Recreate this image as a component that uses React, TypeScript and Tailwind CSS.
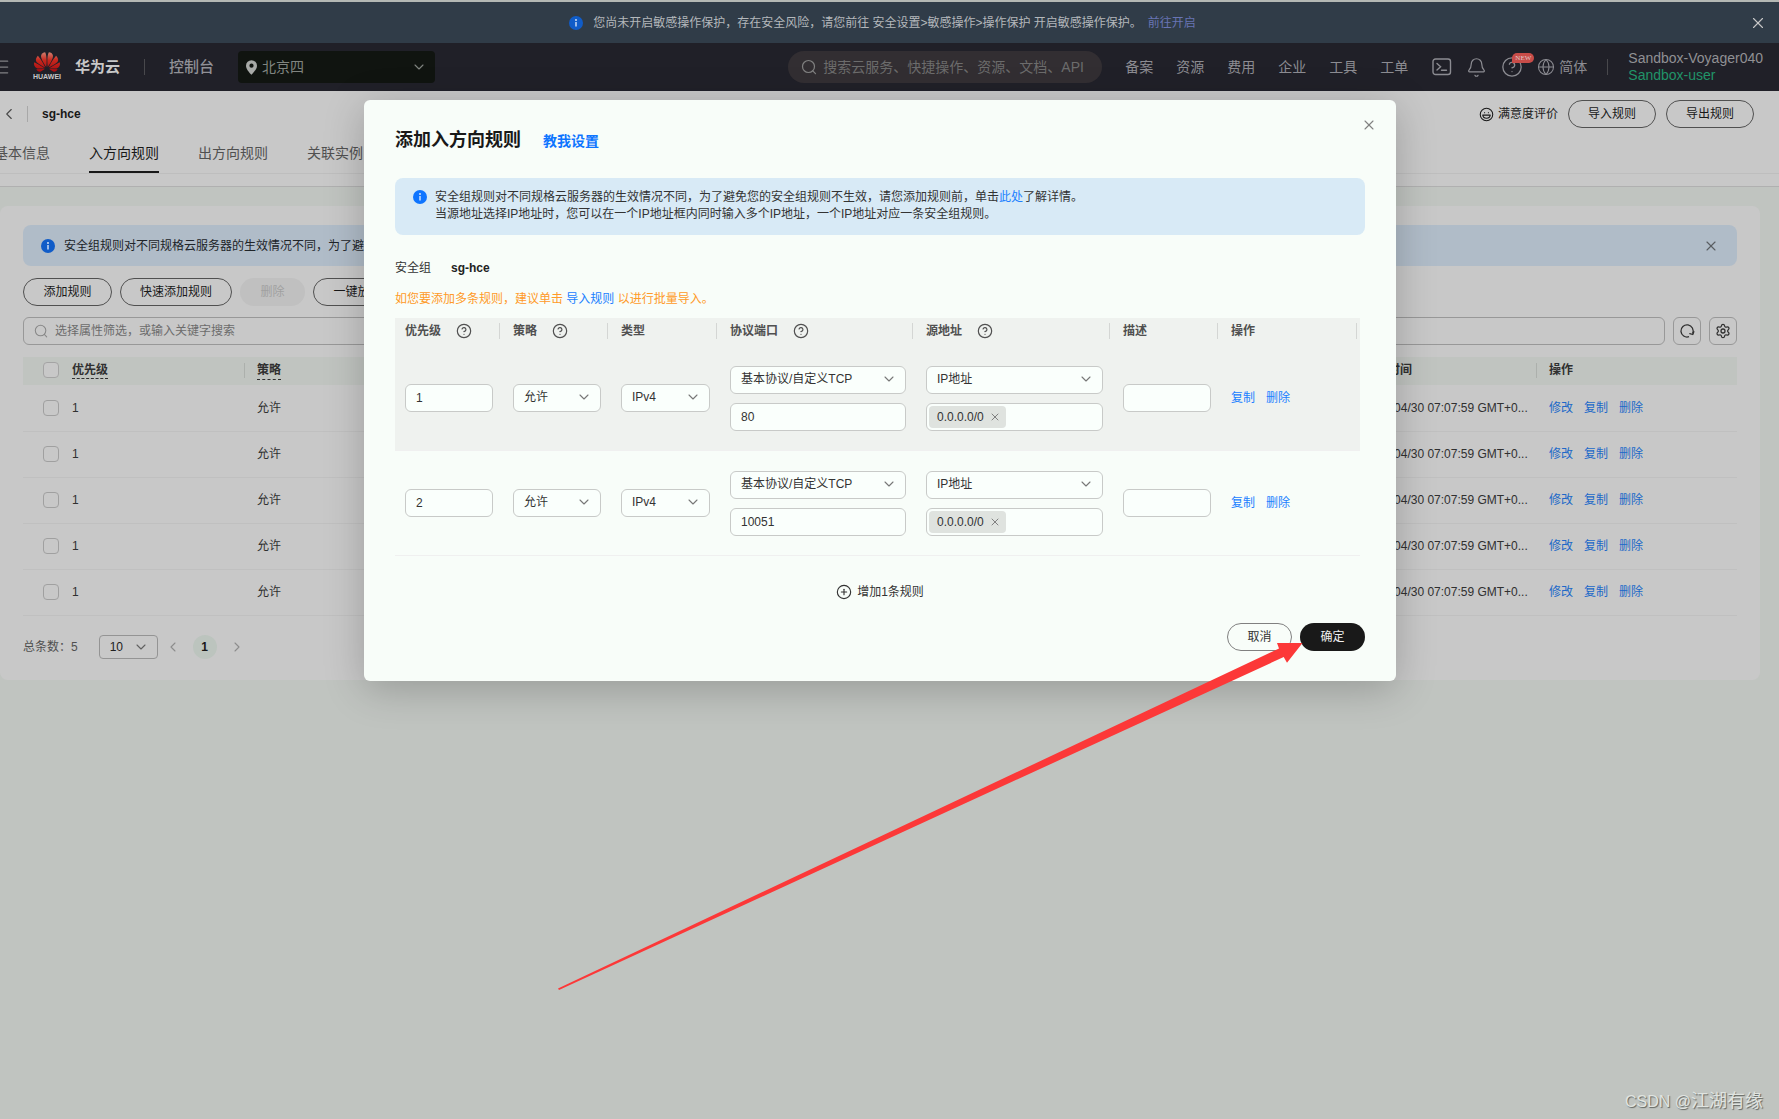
import React from 'react';
import { Bell, ChevronDown, ChevronLeft, ChevronRight, CircleHelp, CirclePlus, Globe, Laugh, Menu, Settings, X } from 'lucide-react';
import { SiHuawei } from 'react-icons/si';

const navLinks = ['备案', '资源', '费用', '企业', '工具', '工单'];

const tabs = ['基本信息', '入方向规则', '出方向规则', '关联实例'];

const savedRules = [1, 2, 3, 4, 5];

const newRules = [
  { priority: '1', port: '80', address: '0.0.0.0/0' },
  { priority: '2', port: '10051', address: '0.0.0.0/0' },
];

const ruleColumns = [
  { title: '优先级', help: true },
  { title: '策略', help: true },
  { title: '类型', help: false },
  { title: '协议端口', help: true },
  { title: '源地址', help: true },
  { title: '描述', help: false },
  { title: '操作', help: false },
];

const InfoIcon: React.FC<{ className?: string }> = ({ className }) => (
  <svg viewBox="0 0 14 14" className={`size-[14px] shrink-0 ${className ?? ''}`} aria-hidden="true">
    <circle cx="7" cy="7" r="7" fill="currentColor" />
    <circle cx="7" cy="4" r="0.9" fill="#e6eefa" />
    <path d="M7 6v4.6" stroke="#e6eefa" strokeWidth="1.3" />
  </svg>
);

const SearchIcon: React.FC<{ className?: string }> = ({ className }) => (
  <svg viewBox="0 0 16 16" fill="none" stroke="currentColor" strokeWidth="1.2" className={`shrink-0 ${className ?? ''}`} aria-hidden="true">
    <circle cx="7.5" cy="7.5" r="6" />
    <path d="M11.8 11.8l2.7 2.9" strokeLinecap="round" />
  </svg>
);

const PinIcon: React.FC = () => (
  <svg viewBox="0 0 12 16" className="h-[15px] w-[11px] shrink-0 text-[#a8aaa8]" aria-hidden="true">
    <path fill="currentColor" fillRule="evenodd" d="M6 0a6 6 0 0 1 6 6c0 3.6-3.6 7.4-6 10C3.6 13.4 0 9.6 0 6a6 6 0 0 1 6-6Zm0 3.7a2.3 2.3 0 1 0 0 4.6 2.3 2.3 0 0 0 0-4.6Z" />
  </svg>
);

const TerminalIcon: React.FC = () => (
  <svg viewBox="0 0 20 18" fill="none" stroke="currentColor" strokeWidth="1.4" className="h-[18px] w-5" aria-hidden="true">
    <rect x="1" y="1" width="17.500" height="15.500" rx="2.500" />
    <path d="M5 5.500l3.600 3.300L5 12.100M9.500 12.300h5" strokeLinecap="round" />
  </svg>
);

const RefreshIcon: React.FC = () => (
  <svg viewBox="0 0 16 16" fill="none" stroke="currentColor" strokeWidth="1.3" className="size-4" aria-hidden="true">
    <path d="M10 13.7A6.100 6.100 0 1 1 13.600 10.400" />
    <path d="M10.8 10.6l3 .9 1-2.800" strokeLinecap="round" strokeLinejoin="round" />
  </svg>
);

const Logo: React.FC = () => (
  <div className="flex w-[26px] flex-col items-center">
    <svg width="0" height="0" className="absolute" aria-hidden="true">
      <defs>
        <linearGradient id="petal" x1="0" y1="0" x2="0" y2="1">
          <stop offset="0" stopColor="#d08070" />
          <stop offset="0.4" stopColor="#c8281e" />
          <stop offset="1" stopColor="#a80c10" />
        </linearGradient>
      </defs>
    </svg>
    <SiHuawei size={26} fill="url(#petal)" className="-my-1" />
    <span className="pt-px text-[7px] leading-[9px] font-bold text-[#c8c8c8]">HUAWEI</span>
  </div>
);

const Field: React.FC<{ label: string; value: string }> = ({ label, value }) => (
  <input
    aria-label={label}
    defaultValue={value}
    className="block h-7 w-full rounded-md border border-[#c8cac8] bg-[#fafffc] px-[10px] text-[#333]"
  />
);

const Dropdown: React.FC<{ label: string; value: string }> = ({ label, value }) => (
  <div className="relative">
    <select
      aria-label={label}
      defaultValue={value}
      className="block h-7 w-full appearance-none rounded-md border border-[#c8cac8] bg-[#fafffc] pr-7 pb-[2px] pl-[10px] text-[#333]"
    >
      <option>{value}</option>
    </select>
    <ChevronDown className="pointer-events-none absolute top-[5px] right-[9px] size-4 text-[#777]" strokeWidth={1.6} />
  </div>
);

const TopNotice: React.FC = () => (
  <div className="flex h-[43px] items-center border-t-2 border-[#b4b8b4] bg-[#303c48] pr-3 pl-4">
    <div className="flex flex-1 items-center justify-center text-[#b4b8bc]">
      <InfoIcon className="mr-[10px] text-[#105cc8]" />
      <span>您尚未开启敏感操作保护，存在安全风险，请您前往 安全设置&gt;敏感操作&gt;操作保护 开启敏感操作保护。</span>
      <a href="#" className="ml-[6px] text-[#6874b4]">前往开启</a>
    </div>
    <button aria-label="关闭提示" className="text-[#c8c8c8]">
      <X className="size-[18px]" strokeWidth={1.5} />
    </button>
  </div>
);

const Header: React.FC = () => (
  <header className="flex h-12 items-center bg-[#202028] pr-4 text-sm text-[#8c8c92]">
    <button aria-label="菜单" className="-ml-[9px] text-[#808084]">
      <Menu className="size-5" strokeWidth={1.5} />
    </button>
    <a href="#" className="ml-[23px] flex items-center gap-[15px]">
      <Logo />
      <span className="text-[15px] font-bold text-[#c8c8c8]">华为云</span>
    </a>
    <span className="mx-6 h-4 w-px bg-[#48484c]" />
    <a href="#" className="text-[15px] font-medium text-[#909096]">控制台</a>
    <button className="ml-6 flex h-8 w-[197px] items-center gap-[5px] rounded bg-[#101410] pr-2 pl-2 text-[#808480]">
      <PinIcon />
      <span className="flex-1 text-left">北京四</span>
      <ChevronDown className="size-4" strokeWidth={1.6} />
    </button>
    <div className="ml-auto flex h-8 w-[314px] items-center gap-[6px] rounded-full bg-[#322e32] px-[13px]">
      <SearchIcon className="size-4 text-[#808080]" />
      <input aria-label="搜索" placeholder="搜索云服务、快捷操作、资源、文档、API" className="min-w-0 flex-1 placeholder:text-[#6c6c6c]" />
    </div>
    <nav className="ml-[23px] flex gap-[23px]">
      {navLinks.map((link) => (
        <a key={link} href="#">{link}</a>
      ))}
    </nav>
    <div className="ml-6 flex items-center">
      <button aria-label="命令行"><TerminalIcon /></button>
      <button aria-label="消息" className="ml-[14px]"><Bell className="size-[21px]" strokeWidth={1.4} /></button>
      <button aria-label="帮助" className="relative ml-[14px]">
        <CircleHelp className="size-[22px]" strokeWidth={1.4} />
        <span className="absolute -top-[3px] left-[11px] rounded-full rounded-bl-none bg-[#c84c48] px-[3px] font-['Liberation_Serif',serif] text-[7px] leading-[10px] text-[#dcc8c8]">NEW</span>
      </button>
      <button className="ml-[14px] flex items-center gap-1">
        <Globe className="size-[18px]" strokeWidth={1.4} />
        简体
      </button>
    </div>
    <span className="mx-5 h-4 w-px bg-[#48484c]" />
    <div className="leading-[17px]">
      <div className="text-[#909094]">Sandbox-Voyager040</div>
      <div className="text-[#209468]">Sandbox-user</div>
    </div>
  </header>
);

const PageHeader: React.FC = () => (
  <div className="h-[96px] border-b border-[#b0b0b0] bg-[#c8c8c8]">
    <div className="flex h-[46px] items-center pr-[25px] text-[#181818]">
      <button aria-label="返回"><ChevronLeft className="size-[18px] text-[#484848]" strokeWidth={1.5} /></button>
      <span className="mx-[9px] h-4 w-px bg-[#a8a8a8]" />
      <h1 className="ml-[5px] font-bold">sg-hce</h1>
      <a href="#" className="mr-[10px] ml-auto flex items-center gap-1">
        <Laugh className="size-[15px]" strokeWidth={1.7} />
        满意度评价
      </a>
      <button className="mr-[10px] h-7 w-22 rounded-full border border-[#505050]">导入规则</button>
      <button className="h-7 w-22 rounded-full border border-[#505050]">导出规则</button>
    </div>
    <nav className="-ml-[6px] flex h-[37px] gap-[39px] border-b border-[#bebebe] text-sm">
      {tabs.map((tab) => (
        <a
          key={tab}
          href="#"
          className={
            tab === '入方向规则'
              ? 'border-b-2 border-[#181818] pt-[6px] text-[#181818]'
              : 'pt-[6px] text-[#505050]'
          }
        >
          {tab}
        </a>
      ))}
    </nav>
  </div>
);

const RulePanel: React.FC = () => (
  <main className="mt-[19px] mr-[19px] rounded-lg bg-[#c8c8c8] px-[23px] pt-[19px] pb-[21px] text-[#303030]">
    <div className="flex h-[41px] items-center rounded-lg bg-[#b0bcc8] px-[18px] text-[#202428]">
      <InfoIcon className="mr-[9px] text-[#105cc8]" />
      <span className="flex-1">安全组规则对不同规格云服务器的生效情况不同，为了避免您的安全组规则不生效，请您添加规则前，单击此处了解详情。</span>
      <button aria-label="关闭"><X className="size-4 text-[#585c60]" strokeWidth={1.6} /></button>
    </div>

    <div className="mt-3 flex gap-2 text-[#181818]">
      <button className="h-7 w-[89px] rounded-full border border-[#505050]">添加规则</button>
      <button className="h-7 w-[112px] rounded-full border border-[#505050]">快速添加规则</button>
      <button disabled className="h-7 w-[65px] rounded-full bg-[#c0c0c0] text-[#a0a0a0]">删除</button>
      <button className="h-7 w-[89px] rounded-full border border-[#505050]">一键放通</button>
    </div>

    <div className="mt-[11px] flex gap-2">
      <div className="flex h-7 flex-1 items-center gap-[7px] rounded-md border border-[#989898] px-[10px]">
        <SearchIcon className="size-[14px] text-[#888]" />
        <input aria-label="筛选规则" placeholder="选择属性筛选，或输入关键字搜索" className="min-w-0 flex-1 placeholder:text-[#6c6c6c]" />
      </div>
      <button aria-label="刷新" className="flex size-7 items-center justify-center rounded-md border border-[#989898]"><RefreshIcon /></button>
      <button aria-label="设置" className="flex size-7 items-center justify-center rounded-md border border-[#989898]"><Settings className="size-4" strokeWidth={1.9} /></button>
    </div>

    <table className="mt-3 w-full table-fixed text-left">
      <colgroup>
        <col className="w-[49px]" />
        <col className="w-[172px]" />
        <col />
        <col className="w-[188px]" />
        <col className="w-[201px]" />
      </colgroup>
      <thead className="bg-[#c0c4c0]">
        <tr className="h-7">
          <th className="pb-[2px] pl-5">
            <input type="checkbox" aria-label="全选" className="block size-4 appearance-none rounded border border-[#a4a4a4] bg-[#c8c8c8]" />
          </th>
          <th className="pb-[2px]"><span className="border-b border-dashed border-[#303030] pb-px">优先级</span></th>
          <th className="pb-[2px]">
            <div className="flex h-[15px] items-center border-l border-[#acb0ac] pl-3">
              <span className="border-b border-dashed border-[#303030] leading-[18px]">策略</span>
            </div>
          </th>
          <th className="pb-[2px] pl-4">修改时间</th>
          <th className="pb-[2px]"><div className="flex h-[15px] items-center border-l border-[#acb0ac] pl-3">操作</div></th>
        </tr>
      </thead>
      <tbody>
        {savedRules.map((id) => (
          <tr key={id} className="h-[46px] border-b border-[#c0c0c0]">
            <td className="pl-5">
              <input type="checkbox" aria-label={`选择规则${id}`} className="block size-4 appearance-none rounded border border-[#a0a0a0]" />
            </td>
            <td>1</td>
            <td className="pl-[13px]">允许</td>
            <td className="pl-4 whitespace-nowrap">2024/04/30 07:07:59 GMT+0...</td>
            <td className="pl-[13px] text-[#2068c8]">
              <div className="flex gap-[11px]">
                <a href="#">修改</a>
                <a href="#">复制</a>
                <a href="#">删除</a>
              </div>
            </td>
          </tr>
        ))}
      </tbody>
    </table>

    <div className="mt-[19px] flex h-6 items-center">
      <span className="text-[#505050]">总条数：5</span>
      <div className="relative ml-[21px]">
        <select aria-label="每页条数" className="block h-6 w-[59px] appearance-none rounded border border-[#949494] pl-[10px] text-[#202020]">
          <option>10</option>
        </select>
        <ChevronDown className="pointer-events-none absolute top-[4px] right-[9px] size-4 text-[#606060]" strokeWidth={1.6} />
      </div>
      <button aria-label="上一页" className="ml-[7px]"><ChevronLeft className="size-4 text-[#8c8c8c]" strokeWidth={1.6} /></button>
      <button className="mx-3 size-6 rounded-full bg-[#bcc4be] font-bold text-[#181818]">1</button>
      <button aria-label="下一页"><ChevronRight className="size-4 text-[#8c8c8c]" strokeWidth={1.6} /></button>
    </div>
  </main>
);

const AddRuleDialog: React.FC = () => (
  <div role="dialog" aria-label="添加入方向规则" className="relative w-[1032px] rounded-md bg-[#f8fdf9] px-[31px] pt-[26px] pb-[30px] text-[#333] shadow-[0_8px_40px_rgba(0,0,0,0.22)]">
    <button aria-label="关闭" className="absolute top-[17px] right-[19px]">
      <X className="size-4 text-[#808080]" strokeWidth={1.6} />
    </button>
    <div className="flex items-center gap-[22px]">
      <h2 className="text-lg font-bold text-[#191919]">添加入方向规则</h2>
      <a href="#" className="pt-[2px] text-sm font-bold text-[#0f75ff]">教我设置</a>
    </div>

    <div className="mt-6 flex rounded-lg bg-[#d8eaf6] px-[18px] pt-[11px] pb-3">
      <InfoIcon className="mt-px mr-2 text-[#0f75ff]" />
      <p className="leading-[17px]">
        安全组规则对不同规格云服务器的生效情况不同，为了避免您的安全组规则不生效，请您添加规则前，单击<a href="#" className="text-[#2080ff]">此处</a>了解详情。
        <br />
        当源地址选择IP地址时，您可以在一个IP地址框内同时输入多个IP地址，一个IP地址对应一条安全组规则。
      </p>
    </div>

    <div className="mt-[25px] flex gap-5">
      <span>安全组</span>
      <b className="text-[#222]">sg-hce</b>
    </div>
    <p className="mt-[15px] text-[#ff9a28]">
      如您要添加多条规则，建议单击 <a href="#" className="text-[#2080ff]">导入规则</a> 以进行批量导入。
    </p>

    <table className="mt-[11px] w-[965px] table-fixed text-left">
      <colgroup>
        <col className="w-[108px]" />
        <col className="w-[108px]" />
        <col className="w-[109px]" />
        <col className="w-[196px]" />
        <col className="w-[197px]" />
        <col className="w-[108px]" />
        <col className="w-[139px]" />
      </colgroup>
      <thead className="bg-[#eff2ef]">
        <tr className="h-7">
          {ruleColumns.map((column) => (
            <th key={column.title} className="pr-[3px] pb-[2px] pl-[10px] font-bold text-[#505050]">
              <div className="flex h-4 items-center gap-[15px] border-r border-[#d4d6d4]">
                {column.title}
                {column.help && <CircleHelp className="size-4" strokeWidth={1.8} />}
              </div>
            </th>
          ))}
        </tr>
      </thead>
      <tbody>
        {newRules.map((rule) => (
          <tr key={rule.priority} className="border-b border-[#f0f0f0] odd:bg-[#eff2ef]">
            <td className="px-[10px]"><Field label="优先级" value={rule.priority} /></td>
            <td className="px-[10px]"><Dropdown label="策略" value="允许" /></td>
            <td className="px-[10px]"><Dropdown label="类型" value="IPv4" /></td>
            <td className="px-[10px] pt-5 pb-[19px]">
              <Dropdown label="协议" value="基本协议/自定义TCP" />
              <div className="mt-[9px]"><Field label="端口" value={rule.port} /></div>
            </td>
            <td className="px-[10px] pt-5 pb-[19px]">
              <Dropdown label="源地址类型" value="IP地址" />
              <div className="mt-[9px] flex h-7 items-center rounded-md border border-[#c8cac8] bg-[#fafffc] px-[2px]">
                <span className="flex h-[22px] items-center gap-[5px] rounded bg-[#dfe3df] pr-[5px] pl-2">
                  {rule.address}
                  <button aria-label="移除地址"><X className="size-3 text-[#808080]" strokeWidth={2} /></button>
                </span>
                <input aria-label="源地址" className="min-w-0 flex-1" />
              </div>
            </td>
            <td className="px-[10px]"><Field label="描述" value="" /></td>
            <td className="px-[10px] text-[#2080ff]">
              <div className="flex gap-[11px]">
                <a href="#">复制</a>
                <a href="#">删除</a>
              </div>
            </td>
          </tr>
        ))}
      </tbody>
    </table>

    <button className="mx-auto mt-7 flex items-center gap-[5px]">
      <CirclePlus className="size-4" strokeWidth={1.7} />
      增加1条规则
    </button>
    <div className="mt-[23px] flex justify-end gap-2">
      <button className="h-7 w-[65px] rounded-full border border-[#808080]">取消</button>
      <button className="h-7 w-[65px] rounded-full bg-[#191919] text-[#f0f0f0]">确定</button>
    </div>
  </div>
);

const App: React.FC = () => {
  return (
    <div lang="zh-CN" className="relative min-h-screen overflow-hidden bg-[#c0c4c0] font-['Liberation_Sans','Noto_Sans_CJK_SC',sans-serif] text-xs">
      <TopNotice />
      <Header />
      <PageHeader />
      <RulePanel />

      <div className="absolute inset-0 flex items-start justify-center pt-[100px] pr-[19px]">
        <AddRuleDialog />
      </div>

      {/* Pointer to the confirm button */}
      <svg viewBox="0 0 1779 1119" className="pointer-events-none absolute top-0 left-0 w-full" aria-hidden="true">
        <path fill="#fc3838" d="M558 988.5L1279 648.500L1277 643H1302.500L1287 662.700L1283.700 657L559 990Z" />
      </svg>

      <div className="absolute right-4 bottom-1 text-lg text-[#e0e4e0] [text-shadow:1px_1px_1px_#606460]">
        <span className="text-base">CSDN @</span>江湖有缘
      </div>
    </div>
  );
};

export default App;
